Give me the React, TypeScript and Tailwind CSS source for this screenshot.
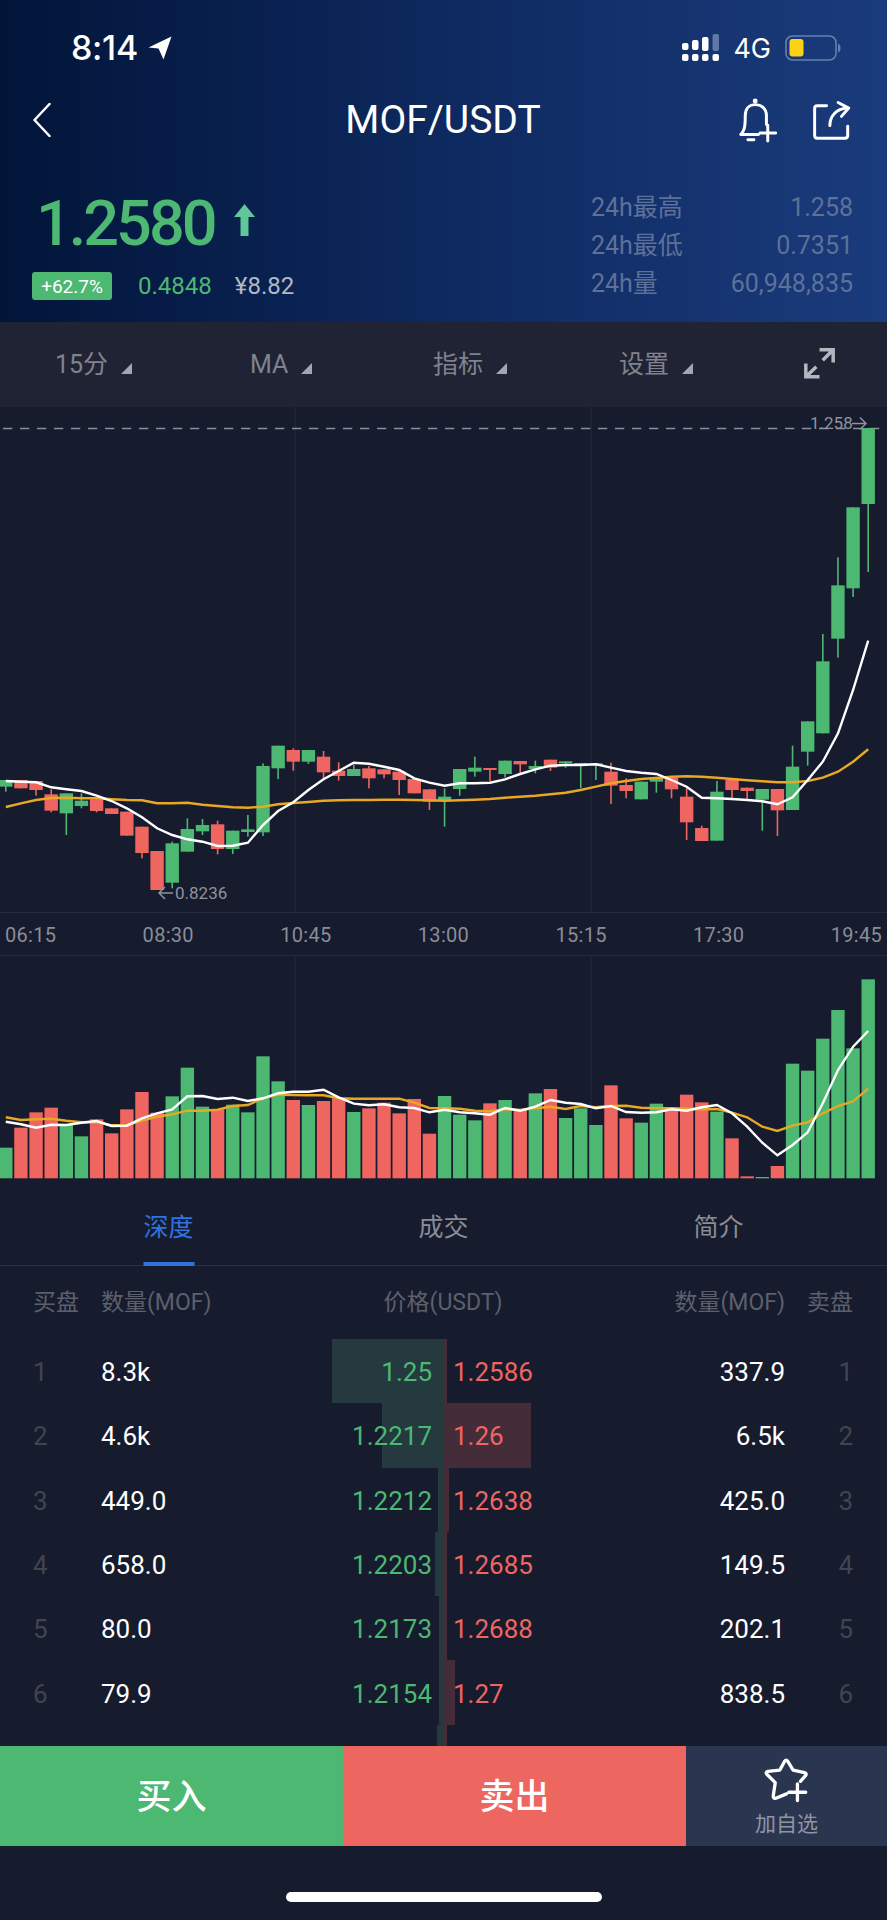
const GREEN = "#4cb872";
const RED = "#ef6560";
const STEP = 15.13;
const BODY = 13.4;
const cx = (i: number) => 5.8 + STEP * i;

type Candle = [string, number, number, number, number];
const g = GREEN;
const r = RED;

// wick top, body top, body bottom, wick bottom (y at 3x, first block from y=700)
const candlesA: Candle[] = [
  [g, 240, 240, 260, 275], [r, 240, 240, 265, 265], [r, 243, 243, 270, 287], [r, 268, 283, 332, 337],
  [g, 280, 280, 340, 405], [g, 280, 302, 318, 325], [r, 298, 298, 333, 337], [r, 325, 325, 342, 342],
  [r, 335, 335, 407, 407], [r, 380, 380, 459, 475], [r, 453, 453, 570, 570], [g, 425, 430, 548, 565],
  [g, 355, 387, 455, 455], [g, 357, 375, 394, 405], [r, 362, 373, 447, 463], [g, 392, 392, 447, 462],
  [g, 345, 388, 396, 410], [g, 190, 198, 397, 408], [g, 137, 137, 205, 237], [r, 145, 150, 185, 212],
  [g, 150, 150, 185, 192], [r, 153, 170, 217, 235], [r, 187, 212, 228, 242], [g, 195, 207, 228, 228],
  [r, 198, 205, 235, 265], [r, 208, 208, 223, 235], [r, 208, 215, 240, 285], [r, 237, 237, 280, 280],
  [r, 268, 268, 305, 330],
];
// second block from y=400
const candlesB: Candle[] = [
  [g, 1165, 1190, 1200, 1280], [g, 1107, 1107, 1167, 1187], [g, 1070, 1103, 1115, 1130], [r, 1104, 1104, 1110, 1143],
  [g, 1082, 1082, 1122, 1132], [r, 1083, 1083, 1093, 1118], [g, 1082, 1098, 1107, 1120], [r, 1079, 1079, 1103, 1113],
  [g, 1084, 1084, 1090, 1103], [g, 1089, 1089, 1093, 1165], [g, 1090, 1090, 1095, 1140], [r, 1088, 1115, 1157, 1212],
  [r, 1135, 1155, 1173, 1195], [g, 1145, 1145, 1198, 1198], [g, 1133, 1133, 1145, 1178], [r, 1133, 1133, 1168, 1195],
  [r, 1165, 1190, 1267, 1320], [r, 1277, 1284, 1323, 1323], [g, 1143, 1175, 1322, 1322], [r, 1140, 1140, 1170, 1195],
  [r, 1163, 1163, 1173, 1197], [g, 1167, 1167, 1199, 1292], [r, 1167, 1167, 1231, 1308], [g, 1037, 1100, 1230, 1230],
  [g, 964, 964, 1055, 1097], [g, 702, 784, 1000, 1000], [g, 472, 556, 716, 773], [g, 322, 322, 565, 591],
  [g, 84, 84, 312, 516],
];

const toY = (base: number) => (z: number) => base + z / 3;
const join = (a: number[], aBase: number, b: number[], bBase: number) => [...a.map(toY(aBase)), ...b.slice(1).map(toY(bBase))];
const points = (ys: number[]) => ys.map((y, i) => `${cx(i).toFixed(1)},${y.toFixed(1)}`).join(" ");

const priceWhite = join(
  [243, 245, 247, 262, 268, 273, 287, 303, 325, 352, 385, 405, 418, 425, 438, 437, 428, 375, 333, 307, 270, 238, 213, 188, 191, 200, 210, 235, 248, 257],
  700,
  [1152, 1150, 1150, 1148, 1138, 1122, 1108, 1097, 1095, 1095, 1093, 1103, 1113, 1118, 1122, 1140, 1160, 1193, 1195, 1197, 1200, 1204, 1213, 1192, 1140, 1085, 1000, 870, 722],
  400,
);
const priceYellow = join(
  [321, 310, 300, 294, 293, 295, 295, 298, 300, 301, 310, 310, 308, 314, 318, 322, 323, 320, 313, 309, 306, 302, 301, 300, 300, 299, 299, 300, 301, 302],
  700,
  [1201, 1201, 1199, 1197, 1193, 1190, 1187, 1183, 1178, 1170, 1160, 1150, 1143, 1137, 1134, 1130, 1129, 1130, 1133, 1137, 1141, 1144, 1147, 1147, 1143, 1133, 1115, 1085, 1048],
  400,
);
const volWhite = join(
  [1265, 1273, 1283, 1274, 1275, 1268, 1263, 1278, 1277, 1255, 1240, 1228, 1189, 1188, 1197, 1193, 1203, 1195, 1180, 1175, 1175, 1169, 1192, 1211, 1216, 1213, 1222, 1224, 1237, 1229],
  700,
  [628, 637, 640, 644, 624, 632, 620, 600, 608, 612, 625, 618, 636, 638, 637, 628, 632, 622, 615, 640, 680, 728, 766, 735, 697, 610, 510, 440, 393],
  900,
);
const volYellow = join(
  [1252, 1260, 1258, 1256, 1262, 1267, 1266, 1276, 1276, 1262, 1250, 1243, 1232, 1232, 1229, 1218, 1215, 1195, 1184, 1185, 1186, 1186, 1195, 1196, 1196, 1196, 1196, 1208, 1224, 1225],
  700,
  [622, 626, 632, 634, 628, 630, 625, 620, 627, 618, 622, 618, 617, 623, 625, 625, 626, 628, 627, 638, 652, 680, 693, 677, 667, 640, 618, 604, 566],
  900,
);

const volA: [string, number][] = [
  [g, 1343], [r, 1283], [r, 1237], [r, 1223], [g, 1272], [g, 1309], [r, 1258], [r, 1300], [r, 1228], [r, 1176],
  [r, 1238], [g, 1189], [g, 1103], [g, 1220], [r, 1228], [g, 1214], [g, 1237], [g, 1069], [g, 1144], [r, 1200],
  [g, 1215], [r, 1203], [r, 1195], [g, 1236], [r, 1225], [r, 1208], [r, 1240], [r, 1197], [r, 1301], [g, 1188],
];
const volB: [string, number][] = [
  [g, 644], [g, 661], [r, 610], [g, 600], [r, 630], [g, 580], [r, 567], [g, 654], [g, 625], [g, 675],
  [r, 556], [r, 655], [g, 668], [g, 611], [r, 630], [r, 584], [r, 607], [g, 635], [r, 715], [r, 829],
  [g, 831], [r, 798], [g, 491], [g, 512], [g, 416], [g, 330], [g, 445], [g, 238],
];
const volumes = [...volA.map(([c, z]) => [c, 700 + z / 3] as const), ...volB.map(([c, z]) => [c, 900 + z / 3] as const)];

const depth = [
  { no: 1, buyQty: "8.3k", buy: "1.25", sell: "1.2586", sellQty: "337.9", buyBar: 112, sellBar: 3 },
  { no: 2, buyQty: "4.6k", buy: "1.2217", sell: "1.26", sellQty: "6.5k", buyBar: 62, sellBar: 87 },
  { no: 3, buyQty: "449.0", buy: "1.2212", sell: "1.2638", sellQty: "425.0", buyBar: 6, sellBar: 5 },
  { no: 4, buyQty: "658.0", buy: "1.2203", sell: "1.2685", sellQty: "149.5", buyBar: 9, sellBar: 3 },
  { no: 5, buyQty: "80.0", buy: "1.2173", sell: "1.2688", sellQty: "202.1", buyBar: 5, sellBar: 3 },
  { no: 6, buyQty: "79.9", buy: "1.2154", sell: "1.27", sellQty: "838.5", buyBar: 5, sellBar: 11 },
  { no: 7, buyQty: "", buy: "", sell: "", sellQty: "", buyBar: 7, sellBar: 3 },
];

function CandleChart() {
  const renderCandle = (c: Candle, i: number, base: number) => {
    const y = toY(base);
    const x = cx(i);
    return (
      <g key={i} fill={c[0]}>
        <rect x={x - 0.8} y={y(c[1])} width={1.6} height={(c[4] - c[1]) / 3} />
        <rect x={x - BODY / 2} y={y(c[2])} width={BODY} height={(c[3] - c[2]) / 3} />
      </g>
    );
  };
  return (
    <svg viewBox="0 407 887 505" className="block w-full h-[505px]">
      <line x1="295" y1="407" x2="295" y2="912" stroke="#262b3d" />
      <line x1="591" y1="407" x2="591" y2="912" stroke="#262b3d" />
      <line x1="3" y1="428.5" x2="887" y2="428.5" stroke="#8b8e98" strokeWidth="1.5" strokeDasharray="9.3 7.7" />
      {candlesA.map((c, i) => renderCandle(c, i, 700))}
      {candlesB.map((c, i) => renderCandle(c, i + 29, 400))}
      <polyline points={points(priceYellow)} fill="none" stroke="#e8a823" strokeWidth="2.4" />
      <polyline points={points(priceWhite)} fill="none" stroke="#ffffff" strokeWidth="2.4" />
      <text x="810" y="429" fontSize="17" fill="#8f929b">1.258</text>
      <path d="M852 423.5H866M860 417.5l6 6-6 6" fill="none" stroke="#8f929b" strokeWidth="1.5" />
      <path d="M173 893H159M165 887l-6 6 6 6" fill="none" stroke="#8f929b" strokeWidth="1.5" />
      <text x="175" y="898.5" fontSize="17" fill="#8f929b">0.8236</text>
    </svg>
  );
}

function VolumeChart() {
  return (
    <svg viewBox="0 956 887 234" className="block w-full h-[234px]">
      <line x1="295" y1="956" x2="295" y2="1178" stroke="#262b3d" />
      <line x1="591" y1="956" x2="591" y2="1178" stroke="#262b3d" />
      {volumes.map(([color, top], i) => (
        <rect key={i} x={cx(i) - BODY / 2} y={top} width={BODY} height={1178.3 - top} fill={color} />
      ))}
      <polyline points={points(volYellow)} fill="none" stroke="#e8a823" strokeWidth="2.4" />
      <polyline points={points(volWhite)} fill="none" stroke="#ffffff" strokeWidth="2.4" />
    </svg>
  );
}

function Tri() {
  return (
    <svg viewBox="0 0 11 11" className="w-[11px] h-[11px] ml-[13px] mt-[8px]">
      <polygon points="11,0 11,11 0,11" fill="#a3a6ae" />
    </svg>
  );
}

function SignalIcon() {
  return (
    <svg width="38" height="28" viewBox="684 34 38 28" fill="#ffffff">
      <rect x="684" y="43" width="6.5" height="7" rx="2" />
      <rect x="694" y="40" width="6.5" height="10" rx="2" />
      <rect x="704" y="37" width="6.5" height="14" rx="2" />
      <rect x="714.5" y="34" width="6.5" height="17" rx="2" fill="#5f78a6" />
      <rect x="684" y="54" width="6.5" height="7" rx="2" />
      <rect x="694" y="54" width="6.5" height="7" rx="2" />
      <rect x="704" y="54" width="6.5" height="7" rx="2" />
      <rect x="714.5" y="54" width="6.5" height="7" rx="2" />
    </svg>
  );
}

function BatteryIcon() {
  return (
    <svg width="56" height="26" viewBox="785 36 56 26">
      <rect x="786" y="37" width="50" height="24" rx="6.5" fill="none" stroke="#6480b0" strokeWidth="1.6" />
      <rect x="789.5" y="40" width="14" height="17.5" rx="3" fill="#fcd116" />
      <path d="M838 44.5c2 1 2.5 2.5 2.5 4.500s-.5 3.500-2.500 4.500z" fill="#6480b0" />
    </svg>
  );
}

export default function App() {
  return (
    <div className="w-full h-[1920px] overflow-hidden flex flex-col bg-[#161b2e] text-white font-['Roboto','Noto_Sans_CJK_SC',sans-serif]">
      <header className="h-[322px] shrink-0 bg-[linear-gradient(90deg,#021539,#0f2b62_55%,#1a3b7c)]">
        <div className="h-[96px] flex items-center justify-between pl-[71px] pr-[46px]">
          <div className="flex items-center">
            <span className="font-['Inter',sans-serif] font-medium text-[34px] leading-none tracking-[-0.3px]">8:14</span>
            <svg width="24" height="24" viewBox="0 0 24 24" className="ml-[10px]">
              <path d="M23.500 0.500L0.500 11.500L10.500 12.500L15.500 23.500Z" fill="#ffffff" />
            </svg>
          </div>
          <div className="flex items-center">
            <SignalIcon />
            <span className="ml-[13px] font-['Inter',sans-serif] text-[27px] leading-none">4G</span>
            <span className="ml-[14px]"><BatteryIcon /></span>
          </div>
        </div>
        <div className="h-[48px] grid grid-cols-3 items-center pl-[33px] pr-[34px]">
          <svg width="18" height="34" viewBox="0 0 18 34" fill="none">
            <path d="M16.500 1L1.500 17L16.500 33" stroke="#ffffff" strokeWidth="2.500" strokeLinecap="round" strokeLinejoin="round" />
          </svg>
          <div className="text-center text-[39px] leading-none whitespace-nowrap">MOF/USDT</div>
          <div className="flex items-center justify-end gap-[31px]">
            <svg width="43" height="47" viewBox="230 230 130 140" fill="none" stroke="#ffffff" strokeWidth="9" strokeLinecap="round">
              <path d="M245 342C255 330 258 322 258 285C258 262 272 252 288 252C306 252 322 264 322 285V312" />
              <path d="M245 342H298" />
              <path d="M266 358H284" />
              <path d="M303 338H350M326 314V362" />
              <circle cx="288" cy="241" r="3" fill="#ffffff" />
            </svg>
            <svg width="43" height="45" viewBox="450 235 130 135" fill="none" stroke="#ffffff" strokeWidth="9" strokeLinecap="round" strokeLinejoin="round">
              <path d="M500 258H472Q464 258 464 266V348Q464 356 472 356H556Q564 356 564 348V320" />
              <path d="M510 318C510 288 530 268 562 265" />
              <path d="M535 248L567 265L545 290" />
            </svg>
          </div>
        </div>
        <div className="flex justify-between pl-[32px] pr-[34px] pt-[44px]">
          <div>
            <div className="flex items-center h-[70px] pl-[4px]">
              <span className="text-[63px] font-medium leading-none tracking-[-3px] text-[#4cb872]">1.2580</span>
              <svg width="21" height="32" viewBox="0 0 21 32" className="ml-[19px] mb-[6px]">
                <path d="M10.500 0L21 13H14.500V32H6.500V13H0Z" fill="#5fc79a" />
              </svg>
            </div>
            <div className="flex items-center mt-[14px]">
              <span className="w-[80px] h-[28px] flex items-center justify-center rounded-[3px] bg-[#4cb872] text-[19px] leading-none">+62.7%</span>
              <span className="ml-[26px] text-[24px] leading-none text-[#4cb872]">0.4848</span>
              <span className="ml-[23px] text-[24px] leading-none text-[#b4b8c4]">¥8.82</span>
            </div>
          </div>
          <div className="w-[262px] mt-[4px] flex flex-col gap-[7px] text-[25px] leading-[31px] text-[#5d7199]">
            <div className="flex justify-between"><span>24h最高</span><span>1.258</span></div>
            <div className="flex justify-between"><span>24h最低</span><span>0.7351</span></div>
            <div className="flex justify-between"><span>24h量</span><span>60,948,835</span></div>
          </div>
        </div>
      </header>

      <div className="h-[85px] shrink-0 flex items-center pl-[55px] bg-[#1f2333] text-[25px] text-[#7f838e]">
        <div className="w-[195px] flex items-center"><span>15分</span><Tri /></div>
        <div className="w-[183px] flex items-center"><span>MA</span><Tri /></div>
        <div className="w-[186px] flex items-center"><span>指标</span><Tri /></div>
        <div className="w-[183px] flex items-center"><span>设置</span><Tri /></div>
        <svg width="35" height="35" viewBox="60 20 110 110" fill="none" stroke="#b5b7be" strokeWidth="11" className="-mt-[2px]">
          <path d="M115 32H158V72M158 32L125 65" />
          <path d="M72 75V117H115M72 117L105 85" />
        </svg>
      </div>

      <CandleChart />
      <div className="h-[44px] shrink-0 flex items-center justify-between px-[5px] pt-[2px] border-y border-[#262b3d] text-[20px] tracking-[0.3px] text-[#8a8d96]">
        {["06:15", "08:30", "10:45", "13:00", "15:15", "17:30", "19:45"].map((t) => (
          <span key={t}>{t}</span>
        ))}
      </div>
      <VolumeChart />

      <div className="h-[76px] shrink-0 grid grid-cols-3 px-[31px] pt-[1px] border-b border-[#2b3043] text-[25px] text-[#8a8d96]">
        <div className="relative flex items-center justify-center text-[#2f73e0]">
          深度
          <span className="absolute -bottom-px left-1/2 -translate-x-1/2 w-[51px] h-[4px] bg-[#2f73e0]" />
        </div>
        <div className="flex items-center justify-center">成交</div>
        <div className="flex items-center justify-center">简介</div>
      </div>

      <div className="h-[73px] shrink-0 flex items-center pl-[33px] pr-[34px] pt-[2px] text-[23px] text-[#5c606c]">
        <div className="flex-1 flex">
          <span className="w-[68px]">买盘</span>
          <span>数量(MOF)</span>
        </div>
        <span>价格(USDT)</span>
        <div className="flex-1 flex justify-end">
          <span>数量(MOF)</span>
          <span className="w-[68px] text-right">卖盘</span>
        </div>
      </div>

      <div className="h-[407px] shrink-0 overflow-hidden">
        {depth.map((row) => (
          <div key={row.no} className="relative h-[64.300px] flex items-center pl-[33px] pr-[34px] pt-[2px] text-[26px] leading-none">
            <div className="absolute inset-y-0 right-[443px] bg-[#243a3f]" style={{ width: row.buyBar }} />
            <div className="absolute inset-y-0 left-[444px] bg-[#452c39]" style={{ width: row.sellBar }} />
            {row.buy && (
              <>
                <span className="relative w-[68px] text-[#41454f]">{row.no}</span>
                <span className="relative w-[199px]">{row.buyQty}</span>
                <span className="relative w-[132px] text-right text-[#4cb872]">{row.buy}</span>
                <span className="relative ml-[21px] text-[#ef6560]">{row.sell}</span>
                <span className="relative flex-1 text-right">{row.sellQty}</span>
                <span className="relative w-[68px] text-right text-[#41454f]">{row.no}</span>
              </>
            )}
          </div>
        ))}
      </div>

      <div className="h-[100px] shrink-0 flex">
        <button type="button" className="w-[343px] pt-[4px] bg-[#4cb872] text-[35px] font-medium">买入</button>
        <button type="button" className="w-[343px] pt-[4px] bg-[#ee6660] text-[35px] font-medium">卖出</button>
        <button type="button" className="flex-1 flex flex-col items-center pt-[8px] bg-[#2a3650] text-[21px] leading-none text-[#8f95a3]">
          <svg width="53" height="50" viewBox="60 40 160 150" fill="none" stroke="#ffffff" strokeWidth="10" strokeLinecap="round" strokeLinejoin="round">
            <path d="M140 160L108 173Q100 175 100 166L106 126L80 100Q76 94 84 92L120 88L134 62Q139 54 144 62L160 88L194 96Q202 98 198 104L182 122" />
            <path d="M147 155H198M173 130V180" />
          </svg>
          <span className="mt-[10px]">加自选</span>
        </button>
      </div>

      <div className="flex-1 flex justify-center pt-[46px]">
        <div className="w-[316px] h-[10px] rounded-full bg-white" />
      </div>
    </div>
  );
}
